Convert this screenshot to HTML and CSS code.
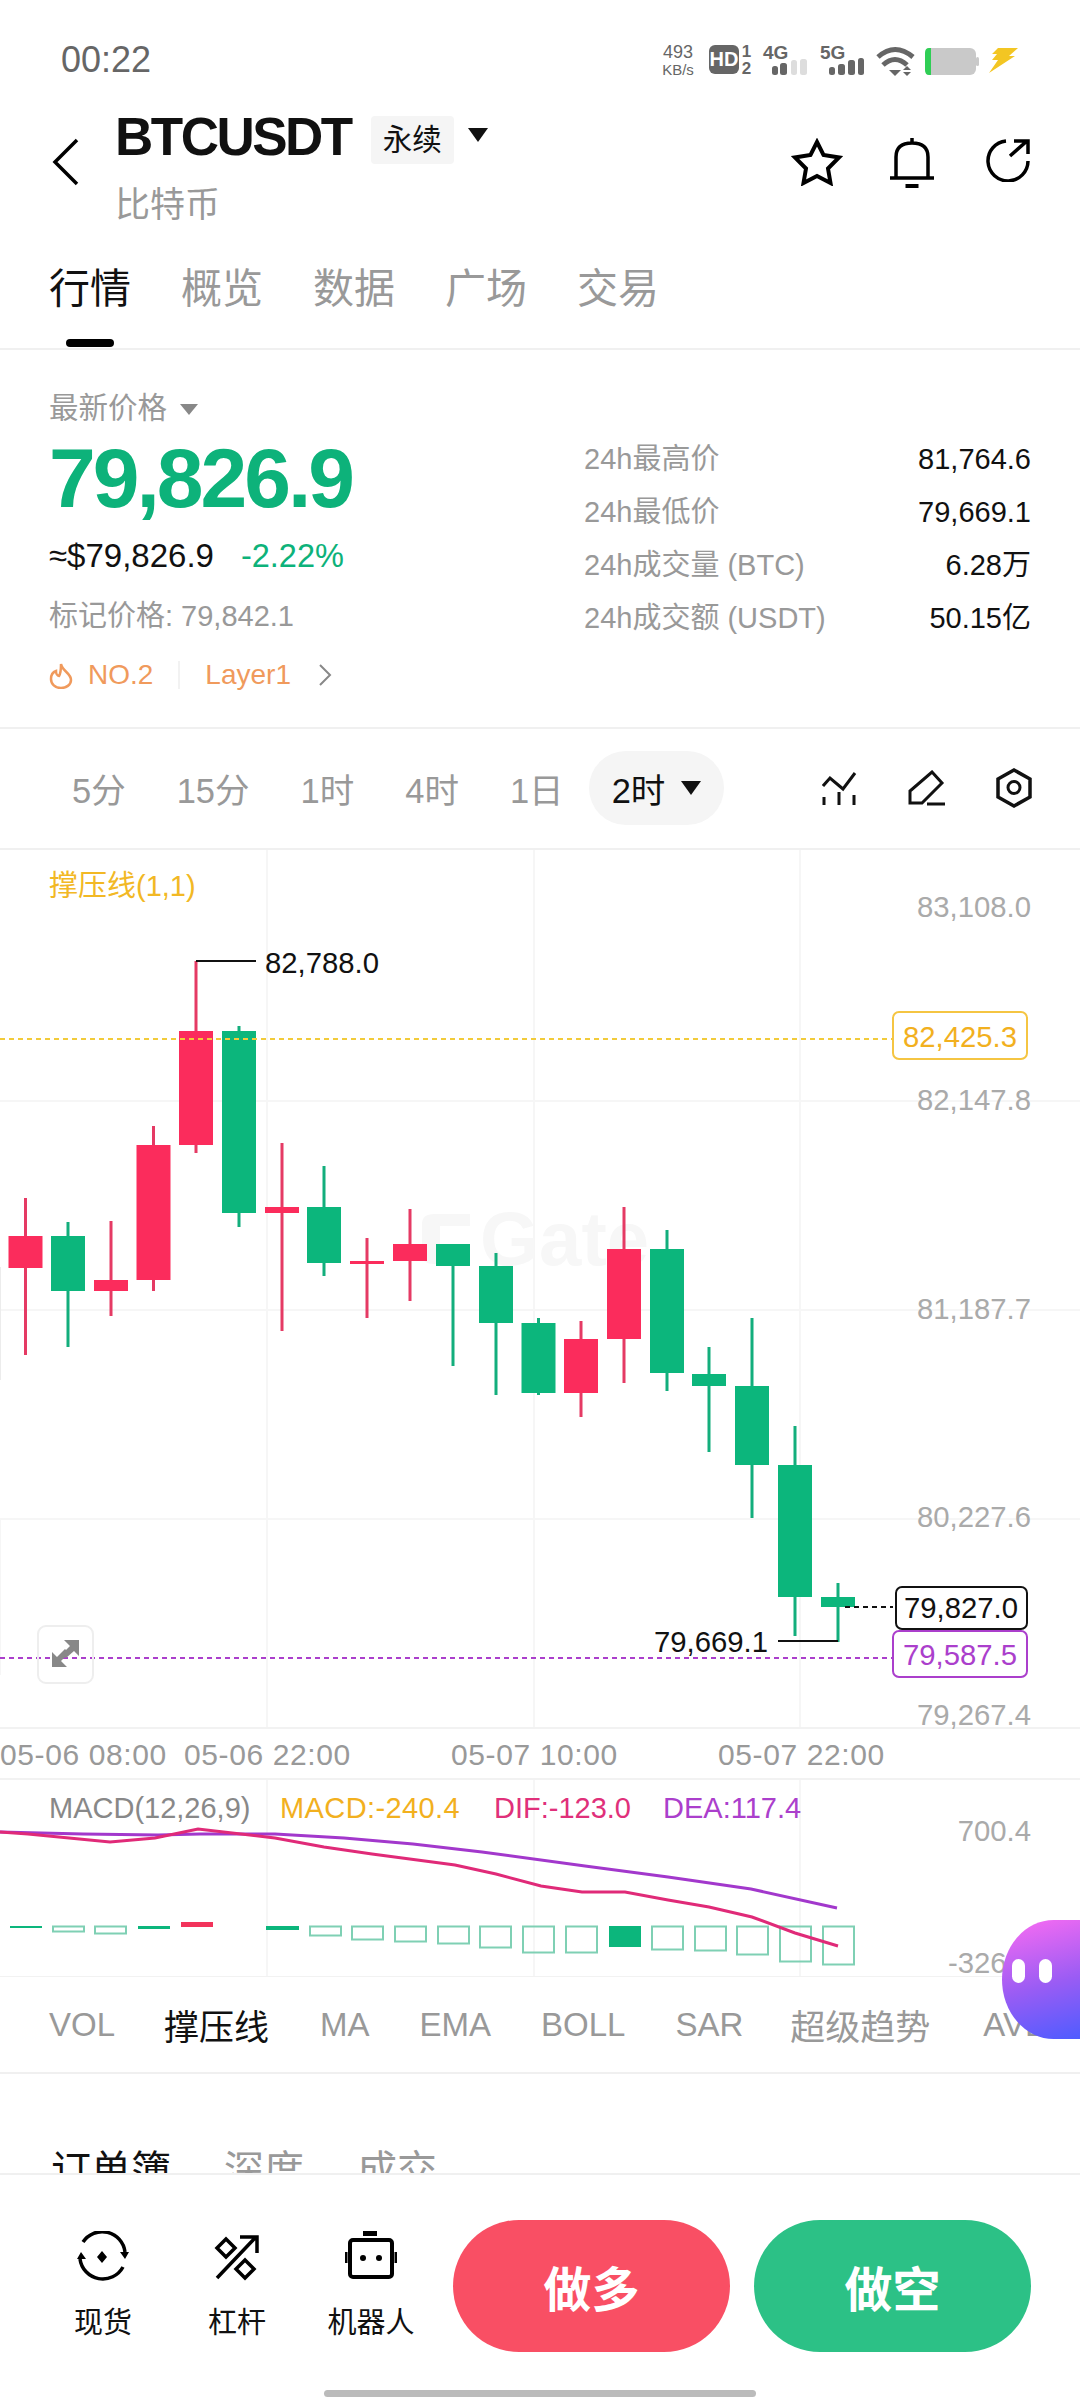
FILE: index.html
```html
<!DOCTYPE html>
<html lang="zh-CN">
<head>
    <meta charset="UTF-8">
    <meta name="viewport" content="width=device-width, initial-scale=1.0">
    <title>BTCUSDT</title>
    <link rel="stylesheet" href="styles.css">
</head>
<body>
<div class="page">
    <!-- Status bar -->
    <div class="status-bar">
        <span class="clock">00:22</span>
        <svg class="status-icons" width="362" height="40" viewBox="660 40 362 40">
            <text class="st-speed" x="680" y="58" text-anchor="middle">493</text>
            <text class="st-unit" x="680" y="75" text-anchor="middle">KB/s</text>
            <rect x="711" y="45" width="30" height="29" rx="6" fill="#666"/>
            <text class="st-hd" x="726" y="66" text-anchor="middle">HD</text>
            <text class="st-sim" x="748.500" y="57" text-anchor="middle">1</text>
            <text class="st-sim" x="748.500" y="74" text-anchor="middle">2</text>
            <text class="st-net" x="765" y="59">4G</text>
            <g fill="#666">
                <rect x="774" y="66" width="6" height="9" rx="2.500"/>
                <rect x="782" y="63" width="7" height="12" rx="2.500"/>
            </g>
            <g fill="#ddd">
                <rect x="793" y="60" width="6" height="15" rx="2.500"/>
                <rect x="802" y="59" width="7" height="16" rx="2.500"/>
            </g>
            <text class="st-net" x="822" y="59">5G</text>
            <g fill="#666">
                <rect x="831" y="67" width="6" height="8" rx="2.500"/>
                <rect x="840" y="64" width="7" height="11" rx="2.500"/>
                <rect x="850" y="60" width="7" height="15" rx="2.500"/>
                <rect x="860" y="58" width="6" height="17" rx="2.500"/>
            </g>
            <g fill="none" stroke="#666" stroke-width="5">
                <path d="M880 57 Q897 42 915 57"/>
                <path d="M885 65 Q897 54 909 65"/>
            </g>
            <path d="M891 70 L903 70 L897 76 Z" fill="#666"/>
            <path d="M909 66 L913 70 L905 70 Z M905 72 L913 72 L909 76 Z" fill="#666"/>
            <rect x="927" y="48" width="51" height="27" rx="6" fill="#c9c9c9"/>
            <path d="M933 48 H931 Q927 48 927 53 V70 Q927 75 931 75 H933 Z" fill="#2fce55"/>
            <rect x="978" y="57" width="3" height="9" rx="1.500" fill="#c9c9c9"/>
            <path d="M1000 48 H1020 L1011 56 H1017 L991 73 L1000 60 H994 L999 54 H994 Z" fill="#f3c623"/>
        </svg>
    </div>

    <!-- Symbol header -->
    <div class="nav">
        <svg class="back" width="28" height="48" viewBox="0 0 28 48">
            <path d="M25 2 L3 24 L25 46" fill="none" stroke="#000" stroke-width="3.500"/>
        </svg>
        <div class="symbol">
            <div class="symbol-row">
                <span class="symbol-name">BTCUSDT</span>
                <span class="symbol-tag">永续</span>
                <span class="tri tri-black"></span>
            </div>
            <div class="symbol-sub">比特币</div>
        </div>
        <div class="nav-icons">
            <svg width="52" height="48" viewBox="0 0 52 48">
                <path d="M26 4 L32.500 17 L48 19.500 L37 30.500 L39.500 45 L26 38 L12.500 45 L15 30.500 L4 19.500 L19.500 17 Z" fill="none" stroke="#000" stroke-width="4"/>
            </svg>
            <svg class="nav-bell" width="44" height="50" viewBox="0 0 44 50">
                <path d="M22 0 V5 M6 39 V19 Q6 5 22 5 Q38 5 38 19 V39 M0 40 H44" fill="none" stroke="#000" stroke-width="3.500"/>
                <rect x="15.500" y="46" width="13" height="4" fill="#000"/>
            </svg>
            <svg class="nav-share" width="46" height="44" viewBox="0 0 46 44">
                <path d="M20 3 A20 20 0 1 0 42 23 M24 18 L41 3 M28 3 H42 V16" fill="none" stroke="#000" stroke-width="3.500"/>
            </svg>
        </div>
    </div>

    <div class="tabs">
        <span class="tab tab-active">行情</span>
        <span class="tab">概览</span>
        <span class="tab">数据</span>
        <span class="tab">广场</span>
        <span class="tab">交易</span>
    </div>

    <!-- Price summary -->
    <div class="summary">
        <div class="summary-left">
            <div class="price-label">最新价格 <span class="tri tri-gray"></span></div>
            <div class="price-big">79,826.9</div>
            <div class="price-sub">≈$79,826.9<span class="price-change">-2.22%</span></div>
            <div class="price-mark">标记价格: 79,842.1</div>
            <div class="price-hot">
                <svg width="24" height="27" viewBox="0 0 24 27">
                    <path d="M12 2 C13 9 22 11 22 18 C22 23 17 26 12 26 C6 26 2 22 2 17 C2 13 4 10 7 9 C7 11 8 14 10 14 C12 11 12 6 12 2 Z" fill="none" stroke="#f09a5c" stroke-width="2.500"/>
                </svg>
                <span class="hot-rank">NO.2</span>
                <span class="hot-line"></span>
                <span class="hot-sector">Layer1</span>
                <svg width="14" height="22" viewBox="0 0 14 22">
                    <path d="M2 1 L12 11 L2 21" fill="none" stroke="#888" stroke-width="2"/>
                </svg>
            </div>
        </div>
        <div class="summary-right">
            <div class="stat"><span>24h最高价</span><b>81,764.6</b></div>
            <div class="stat"><span>24h最低价</span><b>79,669.1</b></div>
            <div class="stat"><span>24h成交量 (BTC)</span><b>6.28万</b></div>
            <div class="stat"><span>24h成交额 (USDT)</span><b>50.15亿</b></div>
        </div>
    </div>

    <!-- Timeframes -->
    <div class="periods">
        <span class="period">5分</span>
        <span class="period">15分</span>
        <span class="period">1时</span>
        <span class="period">4时</span>
        <span class="period">1日</span>
        <span class="period-pill">2时<span class="tri tri-black"></span></span>
        <div class="period-icons">
            <svg width="36" height="36" viewBox="823 770 36 36">
                <path d="M824 786 L831 778 L844 789 L856 773 M825 797 V805 M840 792 V805 M855 795 V805" fill="none" stroke="#111" stroke-width="3"/>
            </svg>
            <svg width="38" height="36" viewBox="909 770 38 36">
                <path d="M911 803 V791 L933 772 L943 783 L923 803 Z M928 804 H946" fill="none" stroke="#111" stroke-width="3"/>
            </svg>
            <svg width="36" height="40" viewBox="996 770 36 40">
                <path d="M1014 772 L1030 781 V799 L1014 808 L998 799 V781 Z" fill="none" stroke="#111" stroke-width="3.500"/>
                <circle cx="1014" cy="789.500" r="6" fill="none" stroke="#111" stroke-width="3"/>
            </svg>
        </div>
    </div>

    <!-- Chart drawn in page coordinates -->
    <svg class="chart" width="1080" height="1127" viewBox="0 850 1080 1127">
        <g stroke="#f6f6f6" stroke-width="2" fill="none">
            <path d="M267 850 V1728 M534 850 V1728 M800 850 V1728"/>
            <path d="M267 1780 V1977 M534 1780 V1977 M800 1780 V1977"/>
            <path d="M0 1101 H1080 M0 1310 H1080 M0 1519 H1080"/>
            <path d="M0 1519 V1675"/>
        </g>
        <path d="M0 1728 H1080 M0 1779 H1080 M0 1977 H1080" stroke="#f2f2f2" stroke-width="2" fill="none"/>
        <path d="M0 1267 V1380" stroke="#ececec" stroke-width="2" fill="none"/>

        <g class="watermark">
            <path d="M422 1224 Q422 1214 434 1214 H470 V1226 H440 V1252 H470 V1264 H434 Q422 1264 422 1254 Z"/>
            <text x="480" y="1265">Gate</text>
        </g>

        <text class="ind-title" x="49" y="896">撑压线(1,1)</text>

        <g class="axis">
            <text x="1031" y="917">83,108.0</text>
            <text x="1031" y="1110">82,147.8</text>
            <text x="1031" y="1319">81,187.7</text>
            <text x="1031" y="1527">80,227.6</text>
            <text x="1031" y="1725">79,267.4</text>
            <text x="1031" y="1841">700.4</text>
            <text x="1031" y="1973">-326.7</text>
        </g>

        <!-- wicks -->
        <g class="up" stroke-width="3">
            <path d="M25.500 1198 V1355 M111 1221 V1316 M153.500 1126 V1291 M196 961 V1153 M282 1143 V1331 M367 1238 V1318 M410 1209 V1301 M581 1321 V1417 M624 1207 V1383"/>
        </g>
        <g class="down" stroke-width="3">
            <path d="M68 1222 V1347 M239 1026 V1227 M324 1166 V1276 M453 1244 V1366 M496 1253 V1395 M538.500 1318 V1395 M667 1230 V1391 M709 1347 V1452 M752 1318 V1518 M795 1426 V1636 M838 1583 V1642"/>
        </g>
        <!-- bodies -->
        <g class="up-body">
            <rect x="8.500" y="1236" width="34" height="32"/>
            <rect x="94" y="1280" width="34" height="11"/>
            <rect x="136.500" y="1145" width="34" height="135"/>
            <rect x="179" y="1031" width="34" height="114"/>
            <rect x="265" y="1207" width="34" height="6"/>
            <rect x="350" y="1261" width="34" height="3"/>
            <rect x="393" y="1244" width="34" height="17"/>
            <rect x="564" y="1339" width="34" height="54"/>
            <rect x="607" y="1249" width="34" height="90"/>
        </g>
        <g class="down-body">
            <rect x="51" y="1236" width="34" height="55"/>
            <rect x="222" y="1031" width="34" height="182"/>
            <rect x="307" y="1207" width="34" height="56"/>
            <rect x="436" y="1244" width="34" height="22"/>
            <rect x="479" y="1266" width="34" height="57"/>
            <rect x="521.500" y="1323" width="34" height="70"/>
            <rect x="650" y="1249" width="34" height="124"/>
            <rect x="692" y="1374" width="34" height="12"/>
            <rect x="735" y="1386" width="34" height="79"/>
            <rect x="778" y="1465" width="34" height="132"/>
            <rect x="821" y="1597" width="34" height="10"/>
        </g>

        <!-- high / low markers -->
        <path d="M196 961 H256 M778 1641 H838" stroke="#111" stroke-width="2" fill="none"/>
        <text class="mark-text" x="265" y="973">82,788.0</text>
        <text class="mark-text" x="768" y="1652" text-anchor="end">79,669.1</text>

        <!-- price lines -->
        <path class="dash-yellow" d="M0 1039 H892"/>
        <path class="dash-purple" d="M0 1658 H892"/>
        <path class="dash-black" d="M845 1607 H893"/>

        <rect class="tag-yellow" x="893" y="1012" width="134" height="47" rx="6"/>
        <text class="tag-text tag-text-yellow" x="960" y="1047">82,425.3</text>
        <rect class="tag-black" x="896" y="1587" width="131" height="42" rx="6"/>
        <text class="tag-text tag-text-black" x="961" y="1618">79,827.0</text>
        <rect class="tag-purple" x="893" y="1631" width="134" height="46" rx="6"/>
        <text class="tag-text tag-text-purple" x="960" y="1665">79,587.5</text>

        <!-- expand button -->
        <rect class="expand" x="38" y="1626" width="55" height="57" rx="8"/>
        <path d="M79 1640 V1656 L74 1651 L66 1658 L62 1654 L70 1646 L64 1640 Z M52 1667 V1652 L57 1657 L65 1649 L69 1653 L61 1661 L67 1667 Z" fill="#888"/>

        <!-- time axis -->
        <g class="time-axis">
            <text x="0" y="1765">05-06 08:00</text>
            <text x="184" y="1765">05-06 22:00</text>
            <text x="451" y="1765">05-07 10:00</text>
            <text x="718" y="1765">05-07 22:00</text>
        </g>

        <!-- MACD -->
        <text class="macd-text macd-gray" x="49" y="1818">MACD(12,26,9)</text>
        <text class="macd-text macd-yellow" x="280" y="1818">MACD:-240.4</text>
        <text class="macd-text macd-pink" x="494" y="1818">DIF:-123.0</text>
        <text class="macd-text macd-purple" x="663" y="1818">DEA:117.4</text>

        <g class="hist-solid">
            <rect x="10" y="1926" width="32" height="2"/>
            <rect x="138" y="1926" width="32" height="3"/>
            <rect x="266" y="1926" width="33" height="4"/>
            <rect x="609" y="1926" width="32" height="21"/>
        </g>
        <rect x="181" y="1922" width="32" height="5" fill="#f2335b"/>
        <g class="hist-hollow">
            <rect x="53" y="1926.500" width="31" height="5"/>
            <rect x="95" y="1926.500" width="31" height="7"/>
            <rect x="310" y="1926.500" width="31" height="9"/>
            <rect x="352" y="1926.500" width="31" height="13"/>
            <rect x="395" y="1926.500" width="31" height="15"/>
            <rect x="438" y="1926.500" width="31" height="17"/>
            <rect x="480" y="1926.500" width="31" height="21"/>
            <rect x="523" y="1926.500" width="31" height="26"/>
            <rect x="566" y="1926.500" width="31" height="26"/>
            <rect x="652" y="1926.500" width="31" height="23"/>
            <rect x="695" y="1926.500" width="31" height="24"/>
            <rect x="737" y="1926.500" width="31" height="28"/>
            <rect x="780" y="1926.500" width="31" height="35"/>
            <rect x="823" y="1926.500" width="31" height="38"/>
        </g>

        <polyline class="line-dea" points="0,1832 83,1834 158,1835 200,1834 275,1834 344,1838 413,1844 482,1852 585,1866 668,1877 751,1889 837,1908"/>
        <polyline class="line-dif" points="0,1832 28,1834 110,1842 155,1838 198,1829 275,1838 324,1847 372,1854 455,1865 496,1874 541,1886 582,1892 625,1892 668,1900 709,1907 752,1917 795,1933 838,1946"/>
    </svg>

    <!-- Indicators -->
    <div class="indicators">
        <span class="ind ind-vol">VOL</span>
        <span class="ind ind-active">撑压线</span>
        <span class="ind ind-ma">MA</span>
        <span class="ind ind-ema">EMA</span>
        <span class="ind ind-boll">BOLL</span>
        <span class="ind ind-sar">SAR</span>
        <span class="ind ind-super">超级趋势</span>
        <span class="ind ind-avl">AVL</span>
    </div>

    <div class="book-tabs">
        <span class="book-tab book-tab-active">订单簿</span>
        <span class="book-tab">深度</span>
        <span class="book-tab">成交</span>
    </div>

    <!-- Bottom actions -->
    <div class="footer">
        <div class="tool">
            <svg width="52" height="50" viewBox="0 0 52 50">
                <path d="M6 11 A23 23 0 0 1 48 21 M46 36 A23 23 0 0 1 3 28" fill="none" stroke="#000" stroke-width="3.500"/>
                <path d="M43 21 L52 21 L48 28 Z M0 28 L9 28 L4 21 Z M25 20 L30 26 L25 32 L20 26 Z" fill="#000"/>
            </svg>
            <span>现货</span>
        </div>
        <div class="tool">
            <svg width="48" height="50" viewBox="0 0 48 50">
                <path d="M4 47 L42 7 M27 6 H44 V22 M13 8 L22 17 L13 26 L4 17 Z M32 29 L41 38 L32 47 L23 38 Z" fill="none" stroke="#000" stroke-width="3.500"/>
            </svg>
            <span>杠杆</span>
        </div>
        <div class="tool">
            <svg width="52" height="50" viewBox="0 0 52 50">
                <rect x="18" y="0" width="14" height="5" fill="#000"/>
                <rect x="5" y="9" width="42" height="37" rx="3" fill="none" stroke="#000" stroke-width="4"/>
                <path d="M1 21 V32 M51 21 V32" stroke="#000" stroke-width="3"/>
                <circle cx="18" cy="27" r="3" fill="#000"/>
                <circle cx="34" cy="27" r="3" fill="#000"/>
            </svg>
            <span>机器人</span>
        </div>
        <button class="trade trade-long">做多</button>
        <button class="trade trade-short">做空</button>
    </div>
    <div class="home-bar"></div>

    <!-- Floating assistant -->
    <div class="assistant">
        <span class="eye eye-left"></span>
        <span class="eye eye-right"></span>
    </div>
</div>
</body>
</html>
```

FILE: styles.css
```css
/* General Styling */
* {
    box-sizing: border-box;
}

body {
    margin: 0;
    background: white;
    font-family: "Liberation Sans", "Noto Sans CJK SC", sans-serif;
    color: #111;
}

.page {
    position: relative;
    width: 1080px;
    height: 2400px;
    overflow: hidden;
    background: white;
}

svg {
    display: block;
    flex: none;
}

/* Small triangles next to labels */
.tri {
    display: inline-block;
    width: 0;
    height: 0;
    border-left: 10px solid transparent;
    border-right: 10px solid transparent;
}

.tri-black {
    border-top: 14px solid #111;
}

.tri-gray {
    border-left-width: 9px;
    border-right-width: 9px;
    border-top: 11px solid #888;
    margin-left: 5px;
    vertical-align: 3px;
}

/* Status bar */
.status-bar {
    display: flex;
    align-items: flex-start;
    justify-content: space-between;
    height: 112px;
    padding: 40px 60px 0 61px;
}

.clock {
    font-size: 36px;
    line-height: 40px;
    color: #666;
}

.st-speed { font-size: 18px; fill: #666; }
.st-unit { font-size: 15px; fill: #666; }
.st-hd { font-size: 20px; font-weight: bold; fill: white; }
.st-sim { font-size: 17px; font-weight: bold; fill: #666; }
.st-net { font-size: 19px; font-weight: bold; fill: #666; }

/* Symbol header */
.nav {
    display: flex;
    align-items: flex-start;
    height: 115px;
    padding-left: 52px;
}

.back {
    margin-top: 26px;
}

.symbol {
    margin-left: 35px;
}

.symbol-row {
    display: flex;
    align-items: center;
    height: 56px;
}

.symbol-name {
    font-size: 53px;
    font-weight: bold;
    line-height: 50px;
    letter-spacing: -2.500px;
    margin-top: -7px;
}

.symbol-tag {
    width: 83px;
    height: 48px;
    margin-left: 20px;
    background: #f5f5f5;
    border-radius: 4px;
    font-size: 29.500px;
    line-height: 48px;
    text-align: center;
}

.symbol-row .tri {
    margin-left: 14px;
    margin-top: -10px;
}

.symbol-sub {
    margin-top: 15px;
    font-size: 35px;
    line-height: 44px;
    color: #999;
}

.nav-icons {
    display: flex;
    align-items: flex-start;
    margin-left: auto;
    padding-top: 26px;
    padding-right: 48px;
}

.nav-bell {
    margin-left: 47px;
}

.nav-share {
    margin-left: 52px;
}

/* Tabs */
.tabs {
    display: flex;
    gap: 50px;
    height: 123px;
    padding: 40px 0 0 49px;
    border-bottom: 2px solid #f0f0f0;
}

.tab {
    position: relative;
    font-size: 41px;
    line-height: 44px;
    color: #999;
}

.tab-active {
    color: #111;
}

.tab-active::after {
    content: "";
    position: absolute;
    left: 17px;
    top: 72px;
    width: 48px;
    height: 8px;
    border-radius: 4px;
    background: #000;
}

/* Price summary */
.summary {
    display: flex;
    height: 379px;
    padding: 38px 49px 0 49px;
    border-bottom: 2px solid #f0f0f0;
}

.summary-left {
    width: 535px;
}

.price-label {
    font-size: 29.500px;
    line-height: 40px;
    color: #999;
}

.price-big {
    font-size: 84px;
    font-weight: bold;
    line-height: 100px;
    letter-spacing: -3px;
    color: #0db27a;
}

.price-sub {
    font-size: 33px;
    line-height: 56px;
}

.price-change {
    margin-left: 27px;
    font-size: 32.500px;
    color: #0db27a;
}

.price-mark {
    font-size: 29px;
    line-height: 64px;
    color: #999;
}

.price-hot {
    display: flex;
    align-items: center;
    height: 54px;
    font-size: 28px;
    color: #f09a5c;
}

.hot-rank {
    margin-left: 15px;
}

.hot-line {
    width: 2px;
    height: 28px;
    margin: 0 25px;
    background: #f2f2f2;
}

.hot-sector + svg {
    margin-left: 27px;
}

.summary-right {
    flex: 1;
    padding-top: 45px;
}

.stat {
    display: flex;
    justify-content: space-between;
    font-size: 29px;
    line-height: 53px;
    color: #999;
}

.stat b {
    font-weight: normal;
    color: #111;
}

/* Timeframes */
.periods {
    display: flex;
    align-items: center;
    gap: 51px;
    height: 121px;
    padding: 0 48px 2px 72px;
    border-bottom: 2px solid #f0f0f0;
}

.period {
    font-size: 34.500px;
    color: #999;
}

.period-pill {
    display: flex;
    align-items: center;
    gap: 16px;
    height: 74px;
    margin-left: -26px;
    padding: 0 23px;
    border-radius: 37px;
    background: #f5f5f5;
    font-size: 34.500px;
}

.period-icons {
    display: flex;
    align-items: center;
    gap: 50px;
    margin-left: auto;
}

/* Chart */
.chart {
    height: 1127px;
}

.chart text {
    font-family: "Liberation Sans", "Noto Sans CJK SC", sans-serif;
}

.watermark {
    fill: #f7f7f7;
    font-size: 76px;
    font-weight: bold;
}

.ind-title {
    font-size: 29px;
    fill: #f2b824;
}

.axis {
    font-size: 29.300px;
    fill: #aaa;
    text-anchor: end;
}

.up { stroke: #e53a64; fill: none; }
.down { stroke: #13ae7c; fill: none; }
.up-body { fill: #fb2c5c; }
.down-body { fill: #0cb67c; }

.mark-text {
    font-size: 29.300px;
    fill: #111;
}

.dash-yellow, .dash-purple, .dash-black {
    fill: none;
    stroke-width: 2;
    stroke-dasharray: 5 4;
}

.dash-yellow { stroke: #f2cb3a; }
.dash-purple { stroke: #ab3fcc; }
.dash-black { stroke: #111; }

.tag-yellow, .tag-black, .tag-purple {
    fill: white;
    stroke-width: 2;
}

.tag-yellow { stroke: #f5c542; }
.tag-black { stroke: #111; }
.tag-purple { stroke: #ab3fcc; }

.tag-text {
    font-size: 29.300px;
    text-anchor: middle;
}

.tag-text-yellow { fill: #f2b01e; }
.tag-text-black { fill: #111; }
.tag-text-purple { fill: #ab3fcc; }

.expand {
    fill: none;
    stroke: #eeeeee;
    stroke-width: 2;
}

.time-axis {
    font-size: 30px;
    letter-spacing: 0.600px;
    fill: #999;
}

.macd-text { font-size: 29px; }
.macd-gray { fill: #888; }
.macd-yellow { fill: #f2b01e; letter-spacing: 0.400px; }
.macd-pink { fill: #e0307a; }
.macd-purple { fill: #ab3fcc; }

.hist-solid { fill: #0cb67c; }

.hist-hollow {
    fill: none;
    stroke: #7fd0b4;
    stroke-width: 2;
}

.line-dea, .line-dif {
    fill: none;
    stroke-width: 3;
}

.line-dea { stroke: #a238cc; }
.line-dif { stroke: #e02a78; }

/* Indicators */
.indicators {
    display: flex;
    align-items: center;
    height: 97px;
    padding-left: 49px;
    border-bottom: 2px solid #f0f0f0;
    white-space: nowrap;
    overflow: hidden;
}

.ind {
    font-size: 33px;
    color: #999;
}

.ind-active {
    margin-left: 49px;
    font-size: 35px;
    color: #111;
}

.ind-ma { margin-left: 51px; }
.ind-ema { margin-left: 50px; }
.ind-boll { margin-left: 50px; }
.ind-sar { margin-left: 50px; }
.ind-super { margin-left: 47px; font-size: 35px; }
.ind-avl { margin-left: 53px; }

/* Order book tabs, cut off by the footer */
.book-tabs {
    display: flex;
    gap: 53px;
    height: 99px;
    padding: 74px 0 0 51px;
    overflow: hidden;
}

.book-tab {
    font-size: 40px;
    line-height: 44px;
    color: #999;
}

.book-tab-active {
    color: #111;
}

/* Footer */
.footer {
    display: flex;
    align-items: flex-start;
    height: 217px;
    padding: 45px 49px 0 36px;
    border-top: 2px solid #f0f0f0;
    background: white;
}

.tool {
    display: flex;
    flex-direction: column;
    align-items: center;
    width: 134px;
    padding-top: 11px;
    font-size: 29px;
    line-height: 40px;
}

.tool span {
    margin-top: 22px;
}

.trade {
    width: 277px;
    height: 132px;
    border: none;
    border-radius: 66px;
    color: white;
    font-family: inherit;
    font-size: 48px;
    font-weight: bold;
}

.trade-long {
    margin-left: 15px;
    background: #f94f64;
}

.trade-short {
    margin-left: 24px;
    background: #2cc186;
}

.home-bar {
    width: 432px;
    height: 7px;
    margin: 0 auto;
    border-radius: 4px;
    background: #bbb;
}

/* Floating assistant */
.assistant {
    position: absolute;
    top: 1920px;
    right: 0;
    display: flex;
    gap: 14px;
    width: 78px;
    height: 119px;
    padding: 39px 0 0 10px;
    border-radius: 52px 0 0 52px / 60px 0 0 60px;
    background: linear-gradient(165deg, #fb6cf2, #9a5cf4 55%, #4f5cff);
}

.eye {
    width: 13px;
    height: 24px;
    border-radius: 7px;
    background: white;
}
```
